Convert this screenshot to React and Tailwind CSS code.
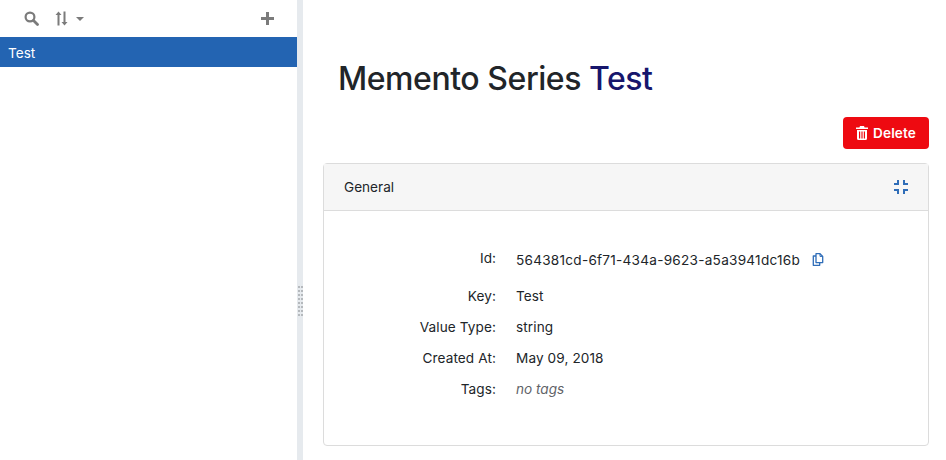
import React from 'react';

const rows = [
    { label: 'Key:', value: 'Test' },
    { label: 'Value Type:', value: 'string' },
    { label: 'Created At:', value: 'May 09, 2018' },
];

export default function App() {
    return (
        <div className="flex h-[460px] w-[946px] overflow-hidden bg-white font-['Inter',sans-serif] text-[13.6px] text-[#212529]">
            {/* Sidebar */}
            <div className="w-[297px] shrink-0">
                <div className="flex h-[37px] items-center pl-[24px] pr-[23px] text-[#7b7b7b]">
                    <svg className="h-[15px] w-[15px]" viewBox="0 0 15 15" fill="none" stroke="currentColor">
                        <circle cx="6" cy="6" r="4.4" strokeWidth="2.2" />
                        <path d="M9.500 9.500L13.500 13.500" strokeWidth="2.800" strokeLinecap="round" />
                    </svg>
                    <svg className="ml-[16px] h-[15px] w-[13px]" viewBox="0 0 13 15" fill="currentColor">
                        <path d="M2.500 14.500V4H.5L3.500.5l3 3.500h-2v10.500z" />
                        <path d="M8.500.5V11h-2l3 3.500 3-3.500h-2V.5z" />
                    </svg>
                    <div className="ml-[8px] h-0 w-0 border-x-[4px] border-t-[4px] border-x-transparent border-t-[#7b7b7b]" />
                    <svg className="ml-auto h-[13px] w-[13px]" viewBox="0 0 13 13" fill="currentColor">
                        <path d="M5 0h3v5h5v3H8v5H5V8H0V5h5z" />
                    </svg>
                </div>
                <div className="flex h-[30px] items-center bg-[#2364b2] pl-[8px] pt-[2px] text-white">Test</div>
            </div>

            {/* Splitter */}
            <div className="flex w-[6px] shrink-0 items-start justify-center bg-[#e6eaee] pl-[1px]">
                <div className="mt-[286px] grid grid-cols-2 gap-x-[1px] gap-y-[2px]">
                    {Array.from({ length: 16 }).map((_, i) => (
                        <div key={i} className="h-[2px] w-[2px] bg-[#b5b9bd]" />
                    ))}
                </div>
            </div>

            {/* Main */}
            <div className="min-w-0 flex-1 pl-[20px] pr-[17px]">
                <h1 className="ml-[15px] mt-[58px] text-[32px] font-medium leading-[42px] tracking-[-0.45px]">
                    Memento Series <span className="text-[#17166c]">Test</span>
                </h1>
                <div className="mt-[17px] flex justify-end">
                    <button className="flex h-[32px] w-[86px] items-center justify-center gap-[5px] rounded-[4px] bg-[#ee0a11] font-semibold tracking-[0.1px] text-white">
                        <svg className="h-[14px] w-[12px]" viewBox="0 0 12 14" fill="currentColor">
                            <path d="M4 0h4l.6 1.500H12V3H0V1.500h3.400z" />
                            <path fillRule="evenodd" d="M1 4h10v8.500A1.500 1.500 0 0 1 9.500 14h-7A1.500 1.500 0 0 1 1 12.500zM3 5.500v7h1.200v-7zM5.400 5.500v7h1.200v-7zM7.800 5.500v7H9v-7z" />
                        </svg>
                        Delete
                    </button>
                </div>

                <div className="mt-[14px] h-[283px] rounded-[4px] border border-[#dcdcdc]">
                    <div className="flex h-[47px] items-center justify-between border-b border-[#dcdcdc] bg-[#f6f6f6] pl-[20px] pr-[20px]">
                        <span>General</span>
                        <svg className="h-[14px] w-[14px] text-[#2f6db8]" viewBox="5 5 14 14" fill="currentColor">
                            <path d="M5 16h3v3h2v-5H5v2zm3-8H5v2h5V5H8v3zm6 11h2v-3h3v-2h-5v5zm2-11V5h-2v5h5V8h-3z" />
                        </svg>
                    </div>
                    <div className="pt-[35px]">
                        <div className="flex h-[28px] items-center">
                            <div className="w-[172px] pb-[4px] text-right">Id:</div>
                            <div className="ml-[20px] flex items-center tracking-[0.25px]">
                                564381cd-6f71-434a-9623-a5a3941dc16b
                                <svg className="ml-[12px] h-[13px] w-[12px] text-[#2f6db8]" viewBox="0 0 12 13" fill="none" stroke="currentColor" strokeWidth="1.300">
                                    <path d="M4 .7h4l2.700 2.700v6.200H4z" strokeLinejoin="round" />
                                    <path d="M8 .7v2.700h2.700" strokeWidth="1" />
                                    <path d="M4 3H1.300v9.300h6.400V9.600" strokeLinejoin="round" />
                                </svg>
                            </div>
                        </div>
                        <div className="mt-[9px] flex flex-col gap-[5px]">
                            {rows.map(row => (
                                <div key={row.label} className="flex h-[26px] items-center">
                                    <div className="w-[172px] text-right tracking-[0.1px]">{row.label}</div>
                                    <div className="ml-[20px] tracking-[0.1px]">{row.value}</div>
                                </div>
                            ))}
                            <div className="flex h-[26px] items-center">
                                <div className="w-[172px] text-right tracking-[0.1px]">Tags:</div>
                                <div className="ml-[20px] italic text-[#5f6368]">no tags</div>
                            </div>
                        </div>
                    </div>
                </div>
            </div>
        </div>
    );
}
